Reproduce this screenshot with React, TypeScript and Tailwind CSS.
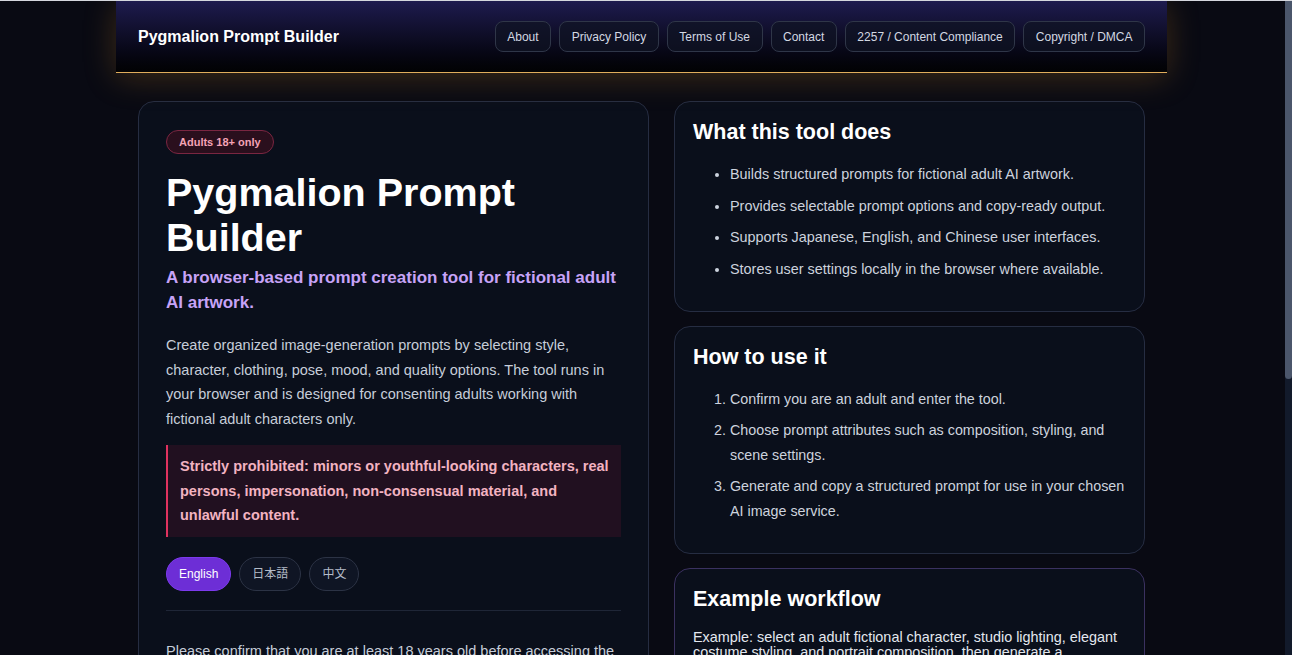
import React from 'react';

const navLinks = ['About', 'Privacy Policy', 'Terms of Use', 'Contact', '2257 / Content Compliance', 'Copyright / DMCA'];

const features = [
  'Builds structured prompts for fictional adult AI artwork.',
  'Provides selectable prompt options and copy-ready output.',
  'Supports Japanese, English, and Chinese user interfaces.',
  'Stores user settings locally in the browser where available.',
];

const steps = [
  'Confirm you are an adult and enter the tool.',
  'Choose prompt attributes such as composition, styling, and scene settings.',
  'Generate and copy a structured prompt for use in your chosen AI image service.',
];

const languages = [
  { code: 'en', label: 'English' },
  { code: 'ja', label: '日本語' },
  { code: 'zh', label: '中文' },
];

function Header() {
  return (
    <header className="relative z-10 h-[72px] px-[22px] flex items-center justify-between bg-linear-to-b from-[#1e1b4f] via-[#0e0d26] to-[#020204] border-b border-[#e0ad5c] shadow-[0_4px_32px_rgba(175,115,30,0.32)]">
      <div className="text-[16px] font-bold text-white">Pygmalion Prompt Builder</div>
      <nav className="flex items-center gap-2">
        {navLinks.map((l) => (
          <a
            key={l}
            href="#"
            className="h-[31px] px-[11.5px] flex items-center rounded-lg border border-[#2f3648] bg-[#0f1424]/70 text-[12px] text-[#d3d8e2]"
          >
            {l}
          </a>
        ))}
      </nav>
    </header>
  );
}

function InfoCard({ title, children, accent }: { title: string; children: React.ReactNode; accent?: boolean }) {
  return (
    <section
      className={`rounded-2xl border bg-[#0a0f1b] pl-[18px] pr-[18px] pt-[14px] pb-[16px] ${accent ? 'border-[#3b3160]' : 'border-[#262d42]'}`}
    >
      <h2 className="text-[21.5px] font-bold text-white leading-[32px]">{title}</h2>
      {children}
    </section>
  );
}

export default function App() {
  const [lang, setLang] = React.useState('en');

  return (
    <div className="flex h-[655px] overflow-hidden bg-[#090a13] border-t border-[#d5d7de] font-['Liberation_Sans',Arial,'Noto_Sans_CJK_JP',sans-serif]">
      <div className="flex-1 min-w-0 pr-[2px]">
        <div className="max-w-[1051px] mx-auto">
          <Header />

          <main className="px-[22px] pt-[28px] pb-10 grid grid-cols-[511px_471px] gap-[25px] items-start">
            {/* intro + age gate */}
            <section className="rounded-2xl border border-[#262d42] bg-[#0a0f1b] px-[27px] pt-[27px] pb-8">
              <span className="inline-flex items-center h-[24px] px-3 rounded-full border border-[#7a2641] bg-[#2a0f1d] text-[11px] font-bold text-[#f4a3b6]">
                Adults 18+ only
              </span>
              <h1 className="mt-[16px] text-[39.5px] font-bold leading-[45px] text-white">Pygmalion Prompt Builder</h1>
              <p className="mt-[6px] text-[17px] font-bold leading-[24.5px] text-[#c7a3f7]">
                A browser-based prompt creation tool for fictional adult AI artwork.
              </p>
              <p className="mt-[18px] text-[14.5px] leading-[24.5px] text-[#c6cdd9]">
                Create organized image-generation prompts by selecting style, character, clothing, pose, mood, and
                quality options. The tool runs in your browser and is designed for consenting adults working with
                fictional adult characters only.
              </p>
              <div className="mt-[14px] border-l-[2px] border-[#e0325f] bg-[#211020] pl-[12px] pr-[6px] py-[9px]">
                <p className="text-[14.5px] font-bold leading-[24.5px] text-[#f2b3c1]">
                  Strictly prohibited: minors or youthful-looking characters, real persons, impersonation,
                  non-consensual material, and unlawful content.
                </p>
              </div>
              <div className="mt-[20px] flex gap-2">
                {languages.map((l) => (
                  <button
                    key={l.code}
                    onClick={() => setLang(l.code)}
                    className={`h-[34px] px-[12px] rounded-full border text-[12px] ${
                      lang === l.code
                        ? 'bg-[#6d2ed6] border-[#7c3aed] text-white'
                        : 'bg-[#0f1524] border-[#2c3345] text-[#b4bcc9]'
                    }`}
                  >
                    {l.label}
                  </button>
                ))}
              </div>
              <div className="mt-[19px] border-t border-[#1f2637]" />
              <p className="mt-[28px] text-[14.5px] leading-[24.5px] text-[#c6cdd9]">
                Please confirm that you are at least 18 years old before accessing the prompt builder.
              </p>
            </section>

            {/* about cards */}
            <div className="flex flex-col gap-[14px]">
              <InfoCard title="What this tool does">
                <ul className="mt-[14px] mb-[14px] pl-[37px] list-disc space-y-[7.5px] text-[14.4px] leading-[24px] text-[#cdd3de]">
                  {features.map((f) => (
                    <li key={f}>{f}</li>
                  ))}
                </ul>
              </InfoCard>
              <InfoCard title="How to use it">
                <ol className="mt-[14px] mb-[14px] pl-[37px] list-decimal space-y-[7px] text-[14.3px] leading-[24.5px] text-[#cdd3de]">
                  {steps.map((s) => (
                    <li key={s}>{s}</li>
                  ))}
                </ol>
              </InfoCard>
              <InfoCard title="Example workflow" accent>
                <p className="mt-[15px] text-[14.4px] leading-[15px] text-[#e4e8ef]">
                  Example: select an adult fictional character, studio lighting, elegant costume styling, and portrait
                  composition, then generate a structured prompt and copy it into your preferred image service.
                </p>
              </InfoCard>
            </div>
          </main>
        </div>
      </div>

      {/* page scrollbar */}
      <div className="w-[7px] shrink-0 bg-[#121a2b]">
        <div className="h-[378px] rounded-b-full bg-[#4b566b]" />
      </div>
    </div>
  );
}
